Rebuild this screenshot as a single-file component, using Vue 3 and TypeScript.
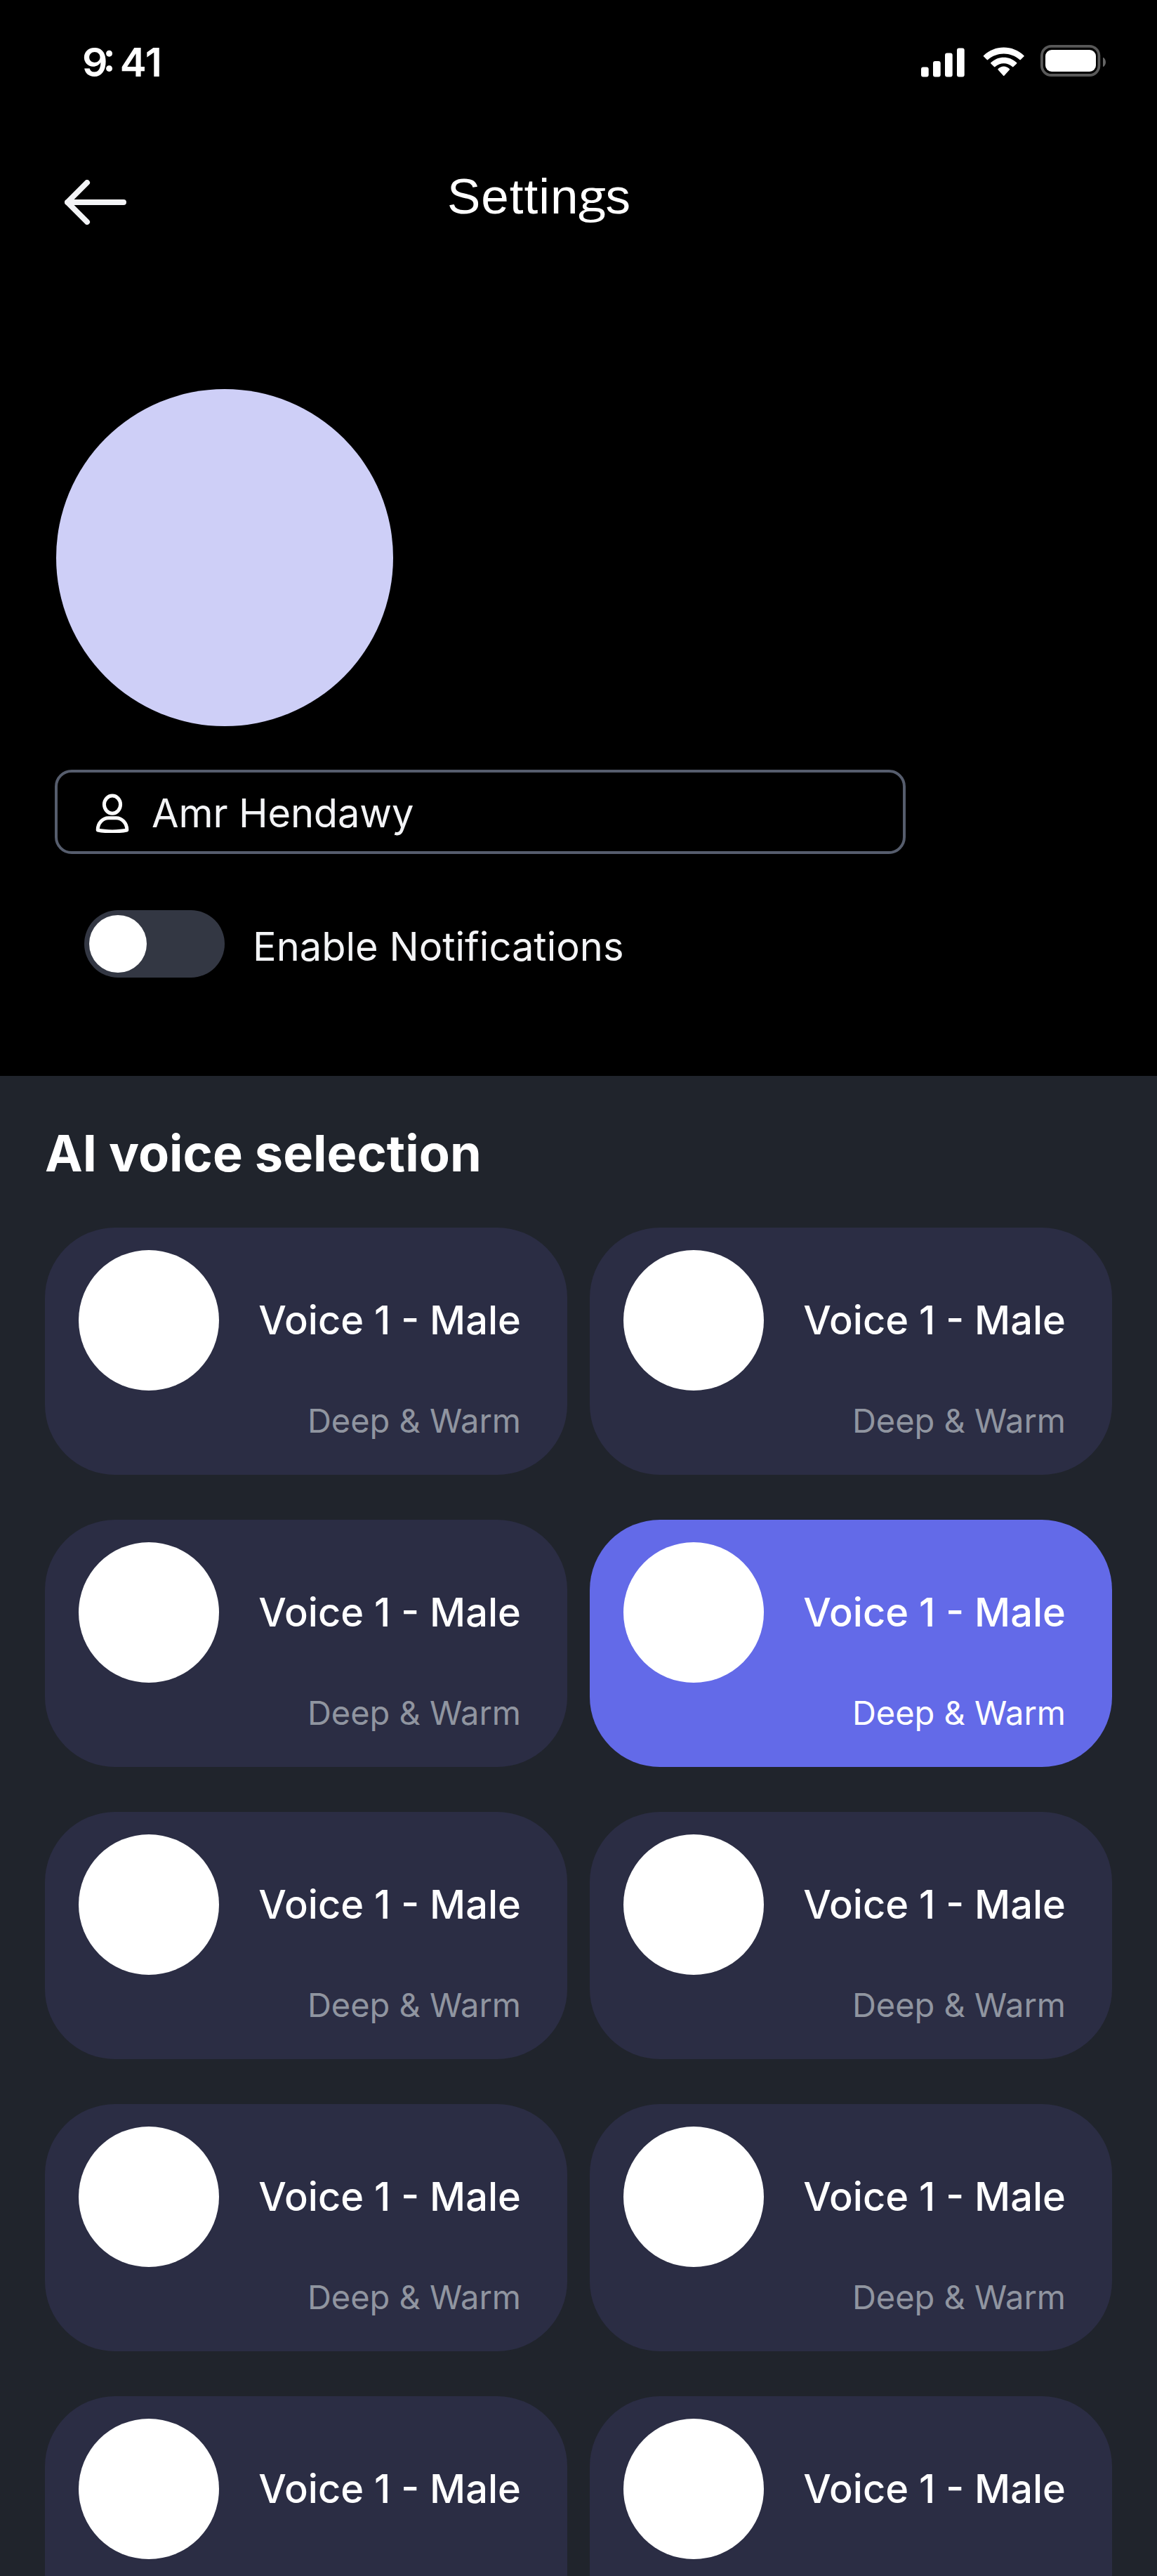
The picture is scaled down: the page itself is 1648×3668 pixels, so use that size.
<script setup lang="ts">
import { ref } from 'vue'

interface Voice {
  id: number
  name: string
  tone?: string
}

const voices: Voice[] = Array.from({ length: 10 }, (_, i) => ({
  id: i,
  name: 'Voice 1 - Male',
  tone: i < 8 ? 'Deep & Warm' : undefined,
}))

const selected = ref<number>(3)
const notifications = ref<boolean>(false)
const userName = 'Amr Hendawy'
</script>

<template>
  <main class="screen">
    <header class="status">
      <div class="clock"><span>9</span><span class="colon">:</span><span>41</span></div>
      <div class="indicators">
        <svg class="signal" viewBox="0 0 62 42">
          <rect x="0" y="27.5" width="10.7" height="14" rx="3" />
          <rect x="17" y="19" width="10.7" height="22.5" rx="3" />
          <rect x="34" y="7.5" width="10.7" height="34" rx="3" />
          <rect x="51" y="0.5" width="10.7" height="41" rx="3" />
        </svg>
        <svg class="wifi" viewBox="0 0 60 42">
          <path d="M1.2 13.6a1 1 0 0 1 0-1.6C17 -3.4 42.5 -3.4 58.3 12a1 1 0 0 1 0 1.6L53.8 18a1 1 0 0 1-1.5 0C39.5 6.6 20 6.6 7.2 18a1 1 0 0 1-1.5 0Z" />
          <path d="M11.5 23.7a1 1 0 0 1 0-1.6C21.7 12.2 37.8 12.2 48 22.1a1 1 0 0 1 0 1.6L43.5 28a1 1 0 0 1-1.5 0C35 21.7 24.5 21.7 17.5 28a1 1 0 0 1-1.5 0Z" />
          <path d="M21.7 32.5a1 1 0 0 1 0-1.6C26.3 26.2 33.2 26.2 37.8 30.9a1 1 0 0 1 0 1.6L30.6 40.4a1.1 1.1 0 0 1-1.7 0Z" />
        </svg>
        <svg class="battery" viewBox="0 0 94 46">
          <rect class="shell" x="1.9" y="2.8" width="81.5" height="41.2" rx="13.5" />
          <rect x="7" y="8" width="72" height="31" rx="9" />
          <path class="nub" d="M89 18.8c5.3 2.2 5.3 11.3 0 13.5Z" />
        </svg>
      </div>
    </header>

    <nav class="topbar">
      <svg class="back" viewBox="0 0 88 64">
        <path d="M32 4 4 32l28 28M4 32h80" />
      </svg>
      <h1>Settin<span class="g">g</span>s</h1>
    </nav>

    <section class="profile">
      <div class="avatar"></div>
      <div class="field">
        <svg class="user" viewBox="0 0 48 56">
          <ellipse cx="24" cy="15.6" rx="11.6" ry="12.6" />
          <path d="M18.5 34.8h11c8 0 15.3 7 15.3 17.2-11.5 2.5-30 2.5-41.6 0C3.2 41.8 10.5 34.8 18.5 34.8Z" />
        </svg>
        <span>{{ userName }}</span>
      </div>
      <div class="notify">
        <button class="toggle" :class="{ on: notifications }" @click="notifications = !notifications">
          <i></i>
        </button>
        <span>Enable Notifications</span>
      </div>
    </section>

    <section class="voices">
      <h2>AI voice selection</h2>
      <div class="grid">
        <article
          v-for="v in voices"
          :key="v.id"
          class="card"
          :class="{ active: v.id === selected }"
          @click="selected = v.id"
        >
          <div class="row">
            <div class="dot"></div>
            <strong>{{ v.name }}</strong>
          </div>
          <p v-if="v.tone">{{ v.tone }}</p>
        </article>
      </div>
    </section>
  </main>
</template>

<style>
body {
  margin: 0;
  background: #000;
}
</style>

<style scoped>
.screen {
  width: 1648px;
  height: 3668px;
  overflow: hidden;
  display: flex;
  flex-direction: column;
  background: #000;
  color: #fff;
  font-family: Inter, sans-serif;
}
.status {
  height: 176px;
  flex: none;
  display: flex;
  justify-content: space-between;
  padding: 0 72px 0 117px;
  box-sizing: border-box;
}
.clock {
  display: flex;
  margin-top: 55px;
  font-size: 57px;
  line-height: 68px;
  font-weight: 600;
}
.colon {
  margin: -7px 6px 0 -7px;
}
.indicators {
  display: flex;
  margin-top: 63px;
}
.indicators svg {
  display: block;
  fill: #fff;
}
.signal {
  width: 62px;
  height: 42px;
  margin: 5px 26px 0 0;
}
.wifi {
  width: 60px;
  height: 42px;
  margin: 4px 22px 0 0;
}
.battery {
  width: 94px;
  height: 46px;
}
.battery .shell {
  fill: none;
  stroke: #595959;
  stroke-width: 3.8;
}
.battery .nub {
  fill: #666;
}
.topbar {
  height: 378px;
  flex: none;
  display: flex;
  align-items: flex-start;
  padding-left: 92px;
}
.back {
  width: 88px;
  height: 64px;
  margin-top: 80px;
  fill: none;
  stroke: #f3f4f6;
  stroke-width: 8;
  stroke-linecap: round;
  stroke-linejoin: round;
}
h1 {
  margin: 64px 0 0 457px;
  font: 400 71px/80px "Liberation Sans", sans-serif;
  letter-spacing: 1px;
}
/* double-storey g, slightly wide and shallow */
.g {
  display: inline-block;
  font-family: "Open Sans", sans-serif;
  font-size: 68px;
  line-height: 0;
  transform: scale(1.07, 0.95) translateY(-1px);
}
.profile {
  height: 978px;
  flex: none;
  font-size: 56px;
  color: #f3f4f6;
}
.avatar {
  width: 480px;
  height: 480px;
  margin-left: 80px;
  border-radius: 50%;
  background: #cecff7;
}
.field {
  width: 1212px;
  height: 120px;
  box-sizing: border-box;
  margin: 62px 0 0 78px;
  border: 4px solid #565d6d;
  border-radius: 24px;
  display: flex;
  align-items: center;
  padding-left: 54px;
  line-height: 88px;
}
.user {
  width: 48px;
  height: 56px;
  margin-right: 32px;
  margin-top: 4px;
  fill: none;
  stroke: #fff;
  stroke-width: 5;
  stroke-linejoin: round;
}
.field span,
.notify span {
  position: relative;
  top: 2px;
  font-weight: 400;
}
.field span {
  letter-spacing: -0.15px;
}
.notify {
  display: flex;
  align-items: center;
  margin: 80px 0 0 120px;
  height: 96px;
}
.notify span {
  top: 4px;
}
.toggle {
  width: 200px;
  height: 96px;
  border: 0;
  margin: 0 40px 0 0;
  padding: 7px;
  border-radius: 48px;
  background: #333743;
  display: flex;
}
.toggle.on {
  justify-content: flex-end;
}
.toggle i {
  width: 82px;
  height: 82px;
  border-radius: 50%;
  background: #fff;
}
.voices {
  flex: 1;
  display: flex;
  flex-direction: column;
  background: #20242c;
  padding: 0 64px;
}
h2 {
  margin: 54px 0 50px;
  font-size: 72px;
  line-height: 112px;
  font-weight: 700;
}
.grid {
  display: grid;
  grid-template-columns: 744px 744px;
  gap: 64px 32px;
}
.card {
  height: 352px;
  border-radius: 100px;
  box-sizing: border-box;
  padding: 32px 66px 0 48px;
  background: #2b2d44;
}
.card.active {
  background: #636ae8;
}
.row {
  display: flex;
  align-items: center;
  justify-content: space-between;
}
.dot {
  width: 200px;
  height: 200px;
  border-radius: 50%;
  background: #fff;
}
.row strong {
  font-size: 56px;
  font-weight: 500;
  line-height: 88px;
  white-space: nowrap;
}
.card p {
  margin: 3px 0 0;
  font-size: 47px;
  line-height: 80px;
  font-weight: 400;
  text-align: right;
  color: #9095a0;
}
.card.active p {
  color: #fff;
}
</style>
